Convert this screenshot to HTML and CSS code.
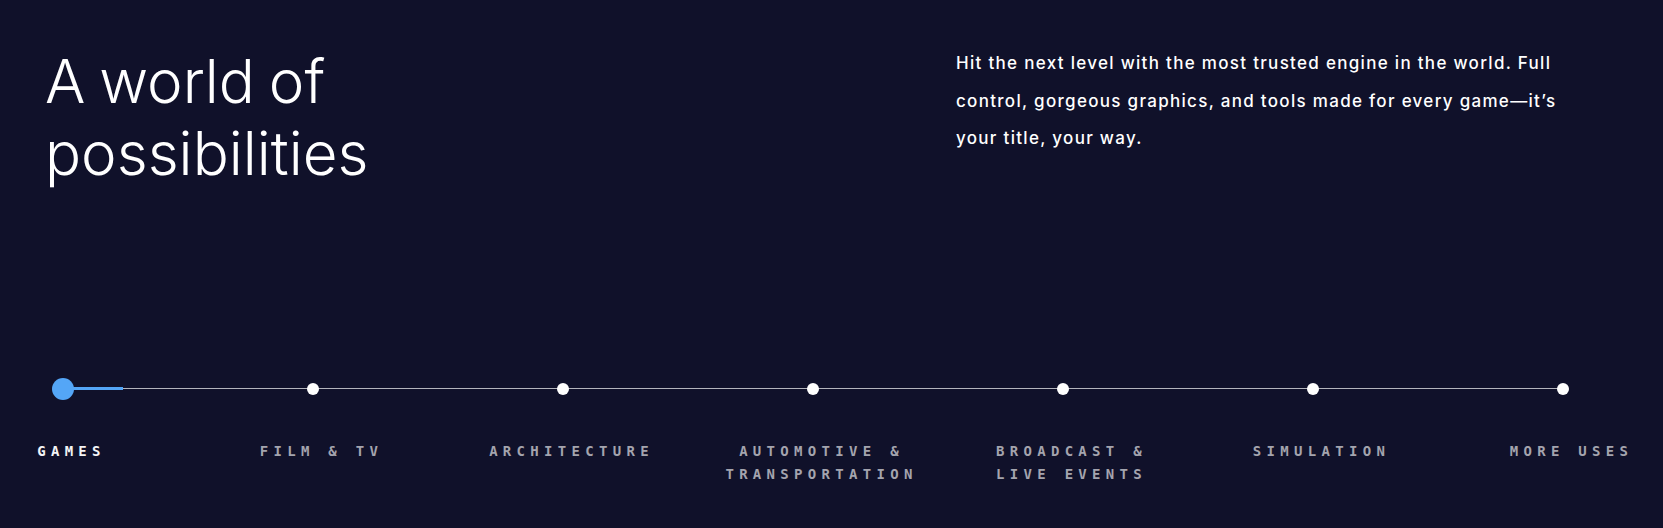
FILE: index.html
```html
<!DOCTYPE html>
<html lang="en">

<head>
    <meta charset="UTF-8">
    <meta name="viewport" content="width=device-width, initial-scale=1.0">
    <title>A world of possibilities</title>
    <link rel="stylesheet" href="styles.css">
</head>

<body>
    <section class="uses">
        <div class="uses_top">
            <h1 class="uses_title">A world of<br>possibilities</h1>
            <p class="uses_text">Hit the next level with the most trusted engine in the world. Full control, gorgeous graphics, and tools made for every game—it’s your title, your way.</p>
        </div>

        <div class="timeline">
            <div class="timeline_line"><span class="timeline_progress"></span></div>
            <div class="step active">
                <span class="dot"></span>
                <span class="label">Games</span>
            </div>
            <div class="step">
                <span class="dot"></span>
                <span class="label">Film &amp; TV</span>
            </div>
            <div class="step">
                <span class="dot"></span>
                <span class="label">Architecture</span>
            </div>
            <div class="step">
                <span class="dot"></span>
                <span class="label">Automotive &amp;<br>Transportation</span>
            </div>
            <div class="step">
                <span class="dot"></span>
                <span class="label">Broadcast &amp;<br>Live Events</span>
            </div>
            <div class="step">
                <span class="dot"></span>
                <span class="label">Simulation</span>
            </div>
            <div class="step">
                <span class="dot"></span>
                <span class="label">More Uses</span>
            </div>
        </div>
    </section>
</body>

</html>
```

FILE: styles.css
```css
html, body {margin: 0; background: #10112a;}
body {color: #fff; font-family: Inter, "Noto Sans", sans-serif; height: 528px; overflow: hidden;}

.uses {padding: 45px 0 0;}

.uses_top {display: flex; justify-content: space-between; height: 338px;}
.uses_title {
    margin: 0 0 0 45px;
    font-size: 60px;
    line-height: 72px;
    font-weight: 300;
    letter-spacing: 0;
    word-spacing: -3px;
}
.uses_text {
    width: 640px;
    margin: 0 67px 0 0;
    font-size: 17px;
    line-height: 37.5px;
    font-weight: 500;
    letter-spacing: 1.3px;
}

/* timeline */
.timeline {
    position: relative;
    display: grid;
    grid-template-columns: repeat(7, 126px);
    column-gap: 124px;
}
.timeline_line {
    position: absolute;
    left: 63px;
    width: 1500px;
    top: 5px;
    height: 1px;
    background: #b4b4bc;
}
.timeline_progress {
    position: absolute;
    left: 0;
    top: -1px;
    width: 60px;
    height: 3px;
    background: #54a6f7;
}

.step {display: flex; flex-direction: column; align-items: center; position: relative;}
.dot {width: 12px; height: 12px; border-radius: 50%; background: #fff; position: relative;}
.step.active .dot {width: 22px; height: 22px; margin: -5px 0; background: #54a6f7;}

.label {
    margin: 45px 0 0 17px;
    font-family: "DejaVu Sans Mono", "Liberation Mono", monospace;
    font-size: 14px;
    line-height: 23px;
    font-weight: bold;
    letter-spacing: 5.3px;
    text-transform: uppercase;
    text-align: center;
    white-space: nowrap;
    color: #a4a4ae;
}
.step.active .label {color: #f4f4f6;}
```
